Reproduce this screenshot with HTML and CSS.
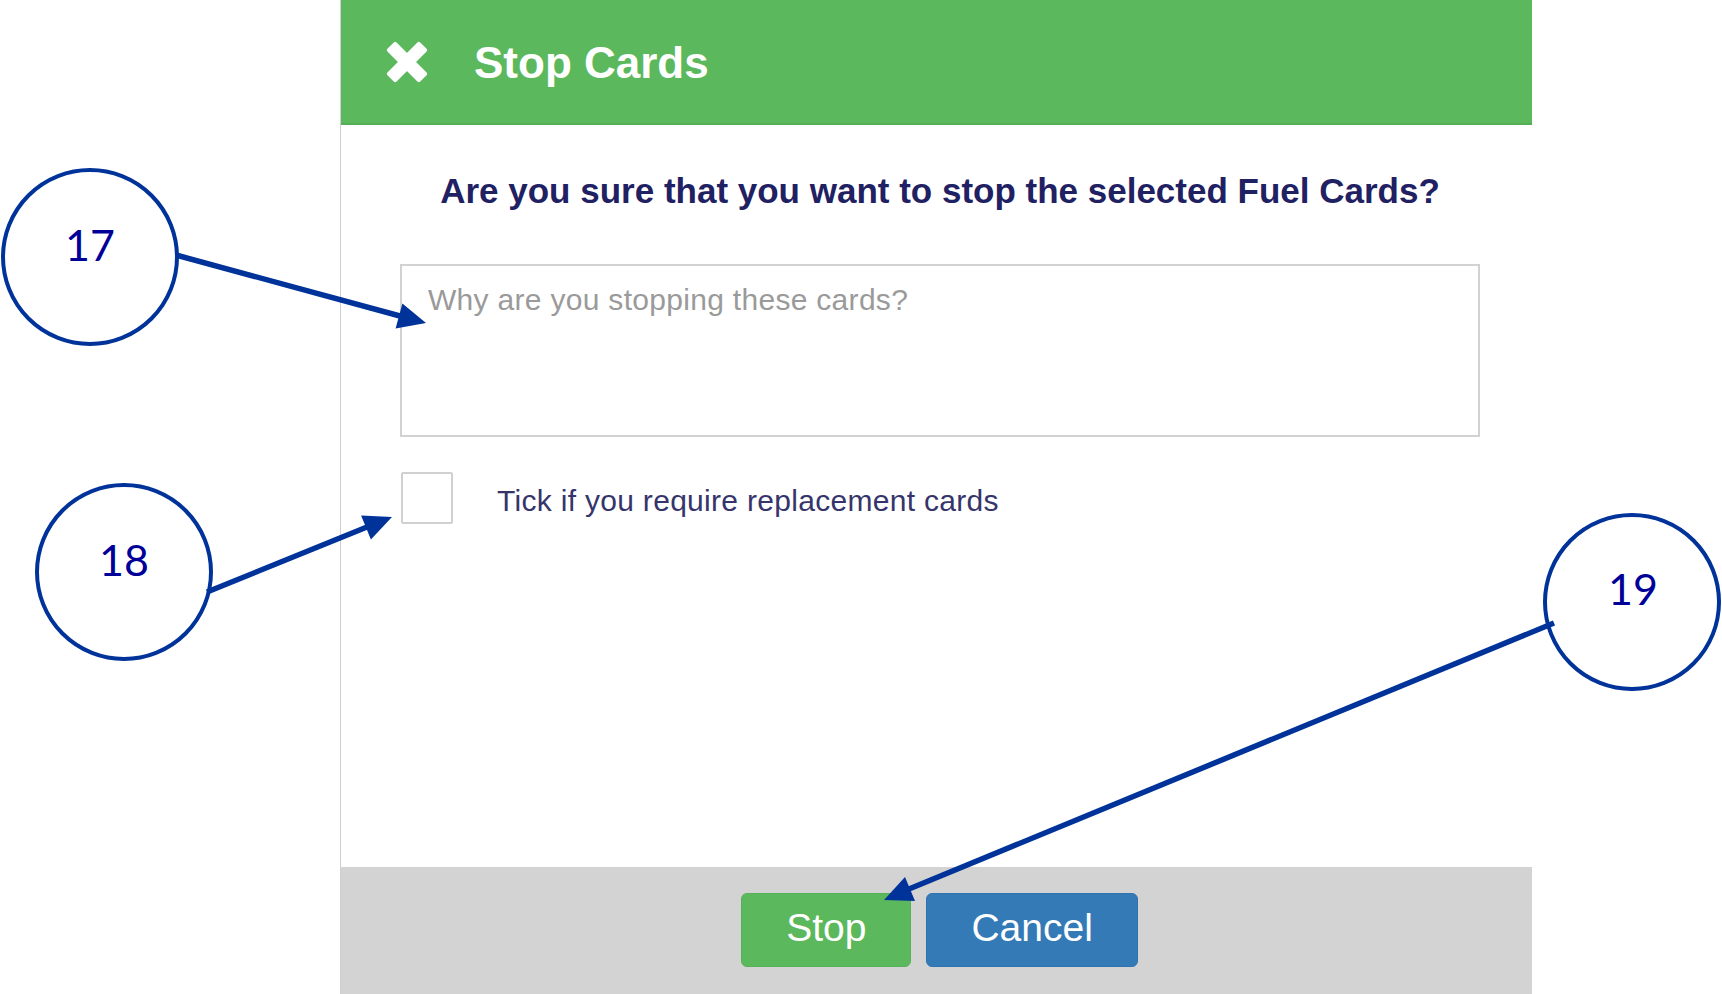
FILE: index.html
```
<!DOCTYPE html>
<html>
    <head>
        <meta charset="utf-8">
        <link rel="stylesheet" href="styles.css">
    </head>
    <body>
        <div class="page">
            <div class="dialog">
                <div class="dialog-header">
                    <svg class="close-icon" width="44" height="44" viewBox="0 0 44 44">
                        <rect x="-1.2" y="15.5" width="46.4" height="13" rx="2" transform="rotate(45 22 22)"/>
                        <rect x="-1.2" y="15.5" width="46.4" height="13" rx="2" transform="rotate(-45 22 22)"/>
                    </svg>
                    <h1 class="dialog-title">Stop Cards</h1>
                </div>
                <div class="dialog-body">
                    <p class="question">Are you sure that you want to stop the selected Fuel Cards?</p>
                    <textarea class="reason" placeholder="Why are you stopping these cards?"></textarea>
                    <div class="replace-row">
                        <input type="checkbox" id="replace-cards">
                        <label for="replace-cards" class="check-box"></label>
                        <label for="replace-cards" class="check-label">Tick if you require replacement cards</label>
                    </div>
                </div>
                <div class="dialog-footer">
                    <button class="btn btn-stop">Stop</button>
                    <button class="btn btn-cancel">Cancel</button>
                </div>
            </div>

            <!-- numbered callouts drawn over the screenshot -->
            <svg class="callouts" width="1722" height="994" viewBox="0 0 1722 994">
                <g class="ring">
                    <circle cx="90" cy="257" r="87"/>
                    <circle cx="124" cy="572" r="87"/>
                    <circle cx="1632" cy="602" r="87"/>
                </g>
                <g class="num">
                    <text x="90" y="261">17</text>
                    <text x="124" y="576">18</text>
                    <text x="1633" y="605">19</text>
                </g>
                <g class="pointer">
                    <line x1="176" y1="255" x2="400" y2="316"/>
                    <polygon points="426,323 395.6,328.5 402.4,303.5"/>
                    <line x1="207" y1="592" x2="367" y2="527"/>
                    <polygon points="392,517 370.9,539.5 361.1,515.5"/>
                    <line x1="1554" y1="623" x2="909" y2="889"/>
                    <polygon points="884,900 915,901 905,877"/>
                </g>
            </svg>
        </div>
    </body>
</html>
```

FILE: styles.css
```
body{
    margin: 0;
    font-family: "Liberation Sans", Arial, sans-serif;
    background-color: #fff;
    overflow: hidden;
}

.page{
    position: relative;
    width: 1722px;
    height: 994px;
}

.dialog{
    margin-left: 340px;
    width: 1192px;
    height: 994px;
    box-sizing: border-box;
    border-left: 1px solid #cfcfcf;
    display: flex;
    flex-direction: column;
}

.dialog-header{
    height: 125px;
    box-sizing: border-box;
    background-color: #5cb85c;
    border-bottom: 2px solid #55ad55;
    display: flex;
    align-items: center;
    padding-left: 44px;
}

.close-icon{
    fill: #fff;
    flex: none;
}

.dialog-title{
    margin: 3px 0 0 45px;
    font-size: 44px;
    line-height: 44px;
    font-weight: bold;
    color: #fff;
}

.dialog-body{
    flex: 1;
    padding: 46px 52px 0 59px;
}

.question{
    margin: 0 0 53px;
    font-size: 35px;
    line-height: 40px;
    font-weight: bold;
    text-align: center;
    color: #1f2163;
}

.reason{
    display: block;
    width: 1080px;
    height: 173px;
    margin: 0;
    box-sizing: border-box;
    border: 2px solid #d2d2d2;
    border-radius: 0;
    padding: 17px 26px;
    font-family: "Liberation Sans", Arial, sans-serif;
    font-size: 30px;
    line-height: 34px;
    letter-spacing: 0.3px;
    resize: none;
    outline: none;
}

.reason::placeholder{
    color: #9a9a9a;
}

.replace-row{
    margin-top: 35px;
    display: flex;
    align-items: center;
}

.replace-row input[type="checkbox"]{
    display: none;
}

.check-box{
    width: 52px;
    height: 52px;
    margin-left: 1px;
    box-sizing: border-box;
    border: 2px solid #d0d0d0;
    border-radius: 2px;
    background-color: #fff;
    cursor: pointer;
}

.check-label{
    margin-left: 44px;
    padding-top: 5px;
    font-size: 30px;
    letter-spacing: 0.3px;
    color: #36356b;
    cursor: pointer;
}

.dialog-footer{
    height: 127px;
    box-sizing: border-box;
    background-color: #d3d3d3;
    padding: 26px 0 0 6px;
    display: flex;
    justify-content: center;
    align-items: flex-start;
    gap: 15px;
}

.btn{
    height: 74px;
    box-sizing: border-box;
    padding: 0 44px 4px;
    border-radius: 6px;
    font-family: "Liberation Sans", Arial, sans-serif;
    font-size: 39px;
    line-height: 68px;
    color: #fff;
    cursor: pointer;
}

.btn-stop{
    background-color: #5cb85c;
    border: 1px solid #55b255;
}

.btn-cancel{
    background-color: #337ab7;
    border: 1px solid #3074af;
}

.callouts{
    position: absolute;
    top: 0;
    left: 0;
    pointer-events: none;
}

.callouts .ring circle{
    fill: none;
    stroke: #003399;
    stroke-width: 4;
}

.callouts .num text{
    font-family: Lato, "Open Sans", sans-serif;
    font-size: 43px;
    fill: #000099;
    text-anchor: middle;
}

.callouts .pointer line{
    stroke: #003399;
    stroke-width: 5.5;
}

.callouts .pointer polygon{
    fill: #003399;
}
```
